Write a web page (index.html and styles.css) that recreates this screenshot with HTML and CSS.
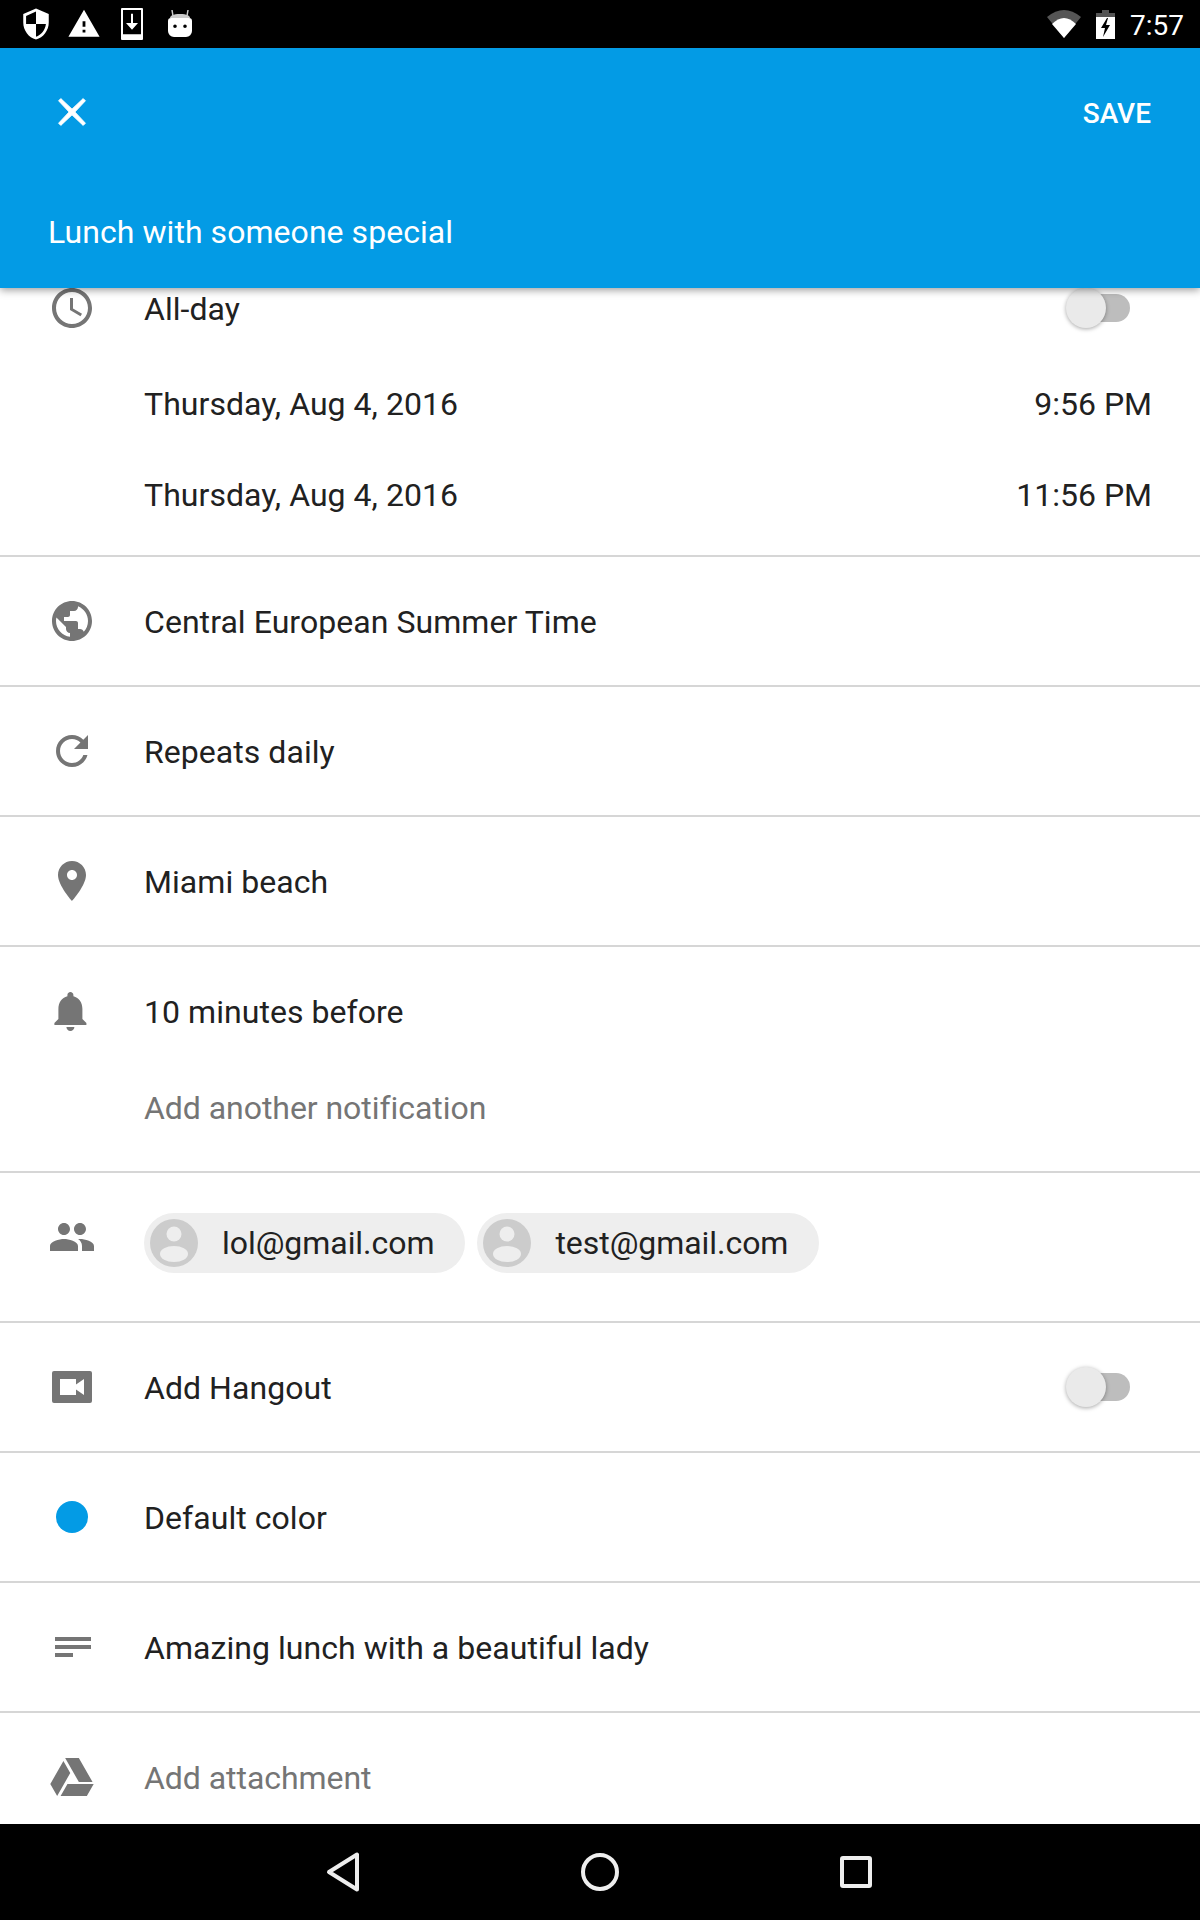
FILE: index.html
```html
<!DOCTYPE html>
<html lang="en">
<head>
    <meta charset="UTF-8">
    <meta name="viewport" content="width=device-width, initial-scale=1.0">
    <title>Edit event</title>
    <link rel="stylesheet" href="styles.css">
</head>
<body>

    <div class="status-bar">
        <svg class="st-shield" viewBox="0 0 24 24"><path fill="#fff" d="M12 1L3 5v6c0 5.55 3.84 10.74 9 12 5.16-1.26 9-6.45 9-12V5l-9-4zm0 10.99h7c-.53 4.12-3.28 7.79-7 8.94V12H5V6.3l7-3.11v8.8z"/></svg>
        <svg class="st-warning" viewBox="0 0 24 24"><path fill="#fff" d="M1 21h22L12 2 1 21zm12-3h-2v-2h2v2zm0-4h-2v-4h2v4z"/></svg>
        <svg class="st-phone" viewBox="0 0 24 34" preserveAspectRatio="none"><path fill="#fff" fill-rule="evenodd" d="M1 1a1 1 0 0 1 1-1h20a1 1 0 0 1 1 1v32a1 1 0 0 1-1 1H2a1 1 0 0 1-1-1zM3 2v26h18V2z"/><path fill="#fff" d="M11 6h2v10h5l-6 7-6-7h5z"/></svg>
        <svg class="st-android" viewBox="0 0 28 28"><path stroke="#ccc" stroke-width="1.5" d="M7 7L6 1M21 7l1-6"/><path fill="#ccc" d="M4 9c0-2 3-4 10-4s10 2 10 4z"/><path fill="#fff" fill-rule="evenodd" d="M2 12a3 3 0 0 1 3-3h18a3 3 0 0 1 3 3v10a6 6 0 0 1-6 6H8a6 6 0 0 1-6-6zM9 15.5a1.8 1.8 0 1 0 0 3.600a1.800 1.800 0 0 0 0-3.600zM19 15.500a1.800 1.800 0 1 0 0 3.600a1.800 1.800 0 0 0 0-3.600z"/></svg>
        <div class="status-right">
            <svg class="st-wifi" viewBox="0 0 34 28"><path fill="#555" d="M0 7Q17-7 34 7L17 28z"/><path fill="#fff" d="M5 14Q17 2 29 14L17 28z"/></svg>
            <svg class="st-battery" viewBox="0 0 19 29"><path fill="#555" d="M6 0h7v3h6v4H0V3h6z"/><path fill="#fff" fill-rule="evenodd" d="M0 7h19v22H0zM11 8L5 18h4l-2 9 7-12h-4l2-7z"/></svg>
            <span class="clock">7:57</span>
        </div>
    </div>

    <header class="app-header">
        <div class="toolbar">
            <svg class="close-icon" viewBox="0 0 24 24"><path fill="#fff" stroke="#fff" stroke-width="0.5" d="M18.700 6.410L17.590 5.300 12 10.590 6.410 5.300 5.300 6.410 10.590 12 5.300 17.590 6.410 18.700 12 13.410 17.590 18.700 18.700 17.590 13.410 12z"/></svg>
            <span class="save-btn">SAVE</span>
        </div>
        <div class="event-title">Lunch with someone special</div>
    </header>

    <main class="form">
        <section class="row-group when">
            <div class="line all-day">
                <svg class="icon" viewBox="0 0 24 24"><path d="M11.990 2C6.470 2 2 6.480 2 12s4.470 10 9.990 10C17.520 22 22 17.520 22 12S17.520 2 11.990 2zM12 20c-4.420 0-8-3.580-8-8s3.580-8 8-8 8 3.580 8 8-3.580 8-8 8z"/><path d="M12.500 7H11v6l5.250 3.150.75-1.230-4.500-2.670z"/></svg>
                <span class="label">All-day</span>
                <span class="switch"><span class="thumb"></span></span>
            </div>
            <div class="line start-line">
                <span class="label">Thursday, Aug 4, 2016</span>
                <span class="time">9:56 PM</span>
            </div>
            <div class="line end-line">
                <span class="label">Thursday, Aug 4, 2016</span>
                <span class="time">11:56 PM</span>
            </div>
        </section>

        <section class="row">
            <svg class="icon" viewBox="0 0 24 24"><path d="M12 2C6.480 2 2 6.480 2 12s4.480 10 10 10 10-4.480 10-10S17.520 2 12 2zm-1 17.930c-3.950-.490-7-3.850-7-7.930 0-.620.080-1.210.210-1.790L9 15v1c0 1.100.900 2 2 2v1.930zm6.900-2.540c-.260-.810-1-1.390-1.900-1.390h-1v-3c0-.550-.450-1-1-1H8v-2h2c.550 0 1-.450 1-1V7h2c1.100 0 2-.900 2-2v-.410c2.930 1.190 5 4.060 5 7.410 0 2.080-.800 3.970-2.100 5.390z"/></svg>
            <span class="label">Central European Summer Time</span>
        </section>

        <section class="row">
            <svg class="icon" viewBox="0 0 24 24"><path d="M17.650 6.350C16.200 4.900 14.210 4 12 4c-4.420 0-7.990 3.580-7.990 8s3.570 8 7.990 8c3.730 0 6.840-2.550 7.730-6h-2.080c-.820 2.330-3.040 4-5.650 4-3.310 0-6-2.690-6-6s2.690-6 6-6c1.660 0 3.140.690 4.220 1.780L13 11h7V4l-2.350 2.350z"/></svg>
            <span class="label">Repeats daily</span>
        </section>

        <section class="row">
            <svg class="icon" viewBox="0 0 24 24"><path d="M12 2C8.130 2 5 5.130 5 9c0 5.250 7 13 7 13s7-7.750 7-13c0-3.870-3.130-7-7-7zm0 9.500c-1.380 0-2.500-1.120-2.500-2.500s1.120-2.500 2.500-2.500 2.500 1.120 2.500 2.500-1.120 2.500-2.500 2.500z"/></svg>
            <span class="label">Miami beach</span>
        </section>

        <section class="row-group notify">
            <div class="line">
                <svg class="icon" viewBox="0.8 0 24 24"><path d="M12 22c1.100 0 2-.900 2-2h-4c0 1.100.890 2 2 2zm6-6v-5c0-3.070-1.640-5.640-4.500-6.320V4c0-.830-.670-1.500-1.500-1.500s-1.500.670-1.500 1.500v.680C7.630 5.360 6 7.920 6 11v5l-2 2v1h16v-1l-2-2z"/></svg>
                <span class="label">10 minutes before</span>
            </div>
            <div class="line add-notify">
                <span class="label muted">Add another notification</span>
            </div>
        </section>

        <section class="row-group guests">
            <svg class="icon" viewBox="0 0 24 24"><path d="M16 11c1.660 0 2.990-1.340 2.990-3S17.660 5 16 5c-1.660 0-3 1.340-3 3s1.340 3 3 3zm-8 0c1.660 0 2.990-1.340 2.990-3S9.660 5 8 5C6.340 5 5 6.340 5 8s1.340 3 3 3zm0 2c-2.330 0-7 1.170-7 3.500V19h14v-2.500c0-2.330-4.670-3.500-7-3.500zm8 0c-.290 0-.620.020-.970.050 1.160.840 1.970 1.970 1.970 3.450V19h6v-2.500c0-2.330-4.670-3.500-7-3.500z"/></svg>
            <div class="chips">
                <div class="chip">
                    <svg class="avatar" viewBox="0 0 48 48"><circle cx="24" cy="24" r="24" fill="#ccc"/><circle cx="24" cy="15" r="7.500" fill="#eee"/><ellipse cx="24" cy="35" rx="14" ry="8" fill="#eee"/></svg>
                    <span>lol@gmail.com</span>
                </div>
                <div class="chip">
                    <svg class="avatar" viewBox="0 0 48 48"><circle cx="24" cy="24" r="24" fill="#ccc"/><circle cx="24" cy="15" r="7.500" fill="#eee"/><ellipse cx="24" cy="35" rx="14" ry="8" fill="#eee"/></svg>
                    <span>test@gmail.com</span>
                </div>
            </div>
        </section>

        <section class="row">
            <svg class="icon" viewBox="0 0 24 24"><path fill-rule="evenodd" d="M3 4h18a1 1 0 0 1 1 1v14a1 1 0 0 1-1 1H3a1 1 0 0 1-1-1V5a1 1 0 0 1 1-1zM6 8v8h8v-2.800l4 2.800V8l-4 2.800V8z"/></svg>
            <span class="label">Add Hangout</span>
            <span class="switch"><span class="thumb"></span></span>
        </section>

        <section class="row">
            <span class="icon-slot"><span class="color-dot"></span></span>
            <span class="label">Default color</span>
        </section>

        <section class="row">
            <svg class="icon" viewBox="0 0 48 48"><path d="M7 14h36v4H7zM7 22h36v4H7zM7 30h18v4H7z"/></svg>
            <span class="label">Amazing lunch with a beautiful lady</span>
        </section>

        <section class="row last">
            <svg class="icon" viewBox="0 0 24 24"><path d="M7.710 3.500L1.150 15L4.580 21L11.130 9.500M9.730 15L6.300 21H19.420L22.850 15M22.280 14L15.420 2H8.580L15.430 14H22.280Z"/></svg>
            <span class="label muted">Add attachment</span>
        </section>
    </main>

    <nav class="nav-bar">
        <svg class="nav-icon" viewBox="0 0 48 48"><path d="M37 6.500V41.500L9 24z"/></svg>
        <svg class="nav-icon" viewBox="0 0 48 48"><circle cx="24" cy="24" r="17"/></svg>
        <svg class="nav-icon" viewBox="0 0 48 48"><rect x="10" y="10" width="28" height="28" rx="1"/></svg>
    </nav>

</body>
</html>
```

FILE: styles.css
```css
* {
    box-sizing: border-box;
}
body {
    margin: 0;
    height: 1920px;
    display: flex;
    flex-direction: column;
    overflow: hidden;
    font-family: Roboto, "Liberation Sans", sans-serif;
    font-size: 32px;
    color: #212121;
    background: white;
}
.status-bar {
    height: 48px;
    flex: none;
    display: flex;
    align-items: center;
    padding-left: 19px;
    background: black;
    color: white;
}
.st-shield, .st-warning {
    width: 34px;
    height: 34px;
}
.st-warning {
    margin-left: 14px;
}
.st-phone {
    width: 24px;
    height: 32px;
    margin-left: 19px;
}
.st-android {
    width: 28px;
    height: 28px;
    margin: -2px 0 0 22px;
}
.status-right {
    margin-left: auto;
    display: flex;
    align-items: center;
    padding-right: 16px;
}
.st-wifi {
    width: 34px;
    height: 28px;
}
.st-battery {
    width: 19px;
    height: 29px;
    margin-left: 15px;
}
.clock {
    font-size: 28px;
    margin-left: 15px;
    padding-top: 2px;
}
.app-header {
    height: 240px;
    flex: none;
    position: relative;
    z-index: 2;
    background: #039be5;
    color: white;
    box-shadow: 0 2px 8px rgba(0, 0, 0, 0.4);
}
.toolbar {
    height: 128px;
    display: flex;
    align-items: center;
    justify-content: space-between;
    padding: 0 48px;
}
.close-icon {
    width: 48px;
    height: 48px;
}
.save-btn {
    font-size: 28px;
    font-weight: 500;
    padding: 2px 1px 0 0;
}
.event-title {
    margin-top: 32px;
    padding-left: 48px;
    line-height: 48px;
    letter-spacing: 0.05px;
}
.form {
    flex: 1;
    overflow: hidden;
}
.row, .row-group {
    border-bottom: 2px solid #d6d6d6;
    padding: 0 48px;
}
.row {
    height: 130px;
    display: flex;
    align-items: center;
}
.row.last {
    border-bottom: none;
}
.line {
    display: flex;
    align-items: center;
    height: 48px;
}
.icon, .icon-slot {
    width: 48px;
    height: 48px;
    flex: none;
    margin-right: 48px;
    fill: #757575;
}
.icon-slot {
    display: flex;
    align-items: center;
    justify-content: center;
}
.color-dot {
    width: 32px;
    height: 32px;
    border-radius: 50%;
    background: #039be5;
}
.label {
    flex: 1;
    letter-spacing: 0.05px;
}
.row .label, .all-day .label, .notify .line:first-child .label {
    padding-top: 2px;
}
.muted {
    color: #757575;
    letter-spacing: -0.05px;
}
.row.last .label {
    padding-top: 0;
}
.when {
    height: 269px;
    display: flex;
    flex-direction: column;
}
.all-day {
    margin-top: -4px;
}
.start-line, .end-line {
    padding-left: 96px;
}
.start-line {
    margin-top: 48px;
}
.end-line {
    margin-top: 43px;
}
.switch {
    position: relative;
    width: 54px;
    height: 28px;
    margin-right: 22px;
    border-radius: 14px;
    background: #bdbdbd;
}
.thumb {
    position: absolute;
    left: -10px;
    top: -6px;
    width: 40px;
    height: 40px;
    border-radius: 50%;
    background: #eaeaea;
    box-shadow: 0 1px 4px rgba(0, 0, 0, 0.35);
}
.notify {
    height: 226px;
    padding-top: 40px;
}
.add-notify {
    padding-left: 96px;
    margin-top: 49px;
}
.guests {
    height: 150px;
    display: flex;
    align-items: flex-start;
    padding-top: 40px;
}
.chips {
    display: flex;
    gap: 12px;
}
.chip {
    height: 60px;
    display: flex;
    align-items: center;
    padding: 0 31px 0 6px;
    border-radius: 30px;
    background: #eeeeee;
    letter-spacing: -0.05px;
}
.avatar {
    width: 48px;
    height: 48px;
    margin-right: 24px;
}
.nav-bar {
    height: 96px;
    flex: none;
    display: flex;
    justify-content: center;
    align-items: center;
    gap: 208px;
    background: black;
}
.nav-icon {
    width: 48px;
    height: 48px;
    fill: none;
    stroke: #eee;
    stroke-width: 4;
    stroke-linejoin: round;
}
```
